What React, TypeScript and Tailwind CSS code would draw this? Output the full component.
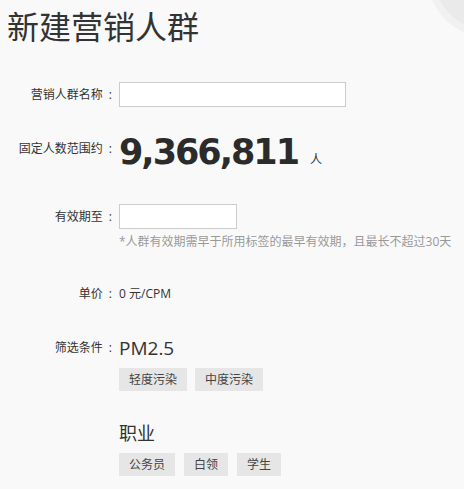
import React from 'react';

const tags1 = ['轻度污染', '中度污染'];
const tags2 = ['公务员', '白领', '学生'];

function Label({ text, className = '' }: { text: string; className?: string }) {
  return (
    <div className={`flex w-[119px] shrink-0 justify-end pr-[7px] text-[12px] leading-[18px] text-[#333] ${className}`}>
      <span>{text}</span>
      <span className="ml-[6px]">:</span>
    </div>
  );
}

function Tag({ text }: { text: string }) {
  return (
    <span className="flex h-[23px] items-center bg-[#e6e6e6] px-[10px] text-[12px] text-[#444]">{text}</span>
  );
}

export default function App() {
  return (
    <div className="relative min-h-screen overflow-hidden bg-[#f9f9f9] font-['Open_Sans','Noto_Sans_CJK_SC',sans-serif] text-[#333]">
      {/* corner decoration */}
      <div className="absolute left-[427px] top-[-88px] flex h-[126px] w-[126px] items-center justify-center rounded-full bg-[#f1f1f1]">
        <div className="h-[112px] w-[112px] rounded-full bg-[#eaeaea]" />
      </div>

      <div className="relative pt-[11px]">
        <h1 className="pl-[7px] text-[32px] font-normal leading-[32px] text-[#333]">新建营销人群</h1>

        {/* name */}
        <div className="mt-[39px] flex items-center">
          <Label text="营销人群名称" />
          <input className="h-[25px] w-[227px] border border-[#ccc] bg-white outline-none" />
        </div>

        {/* count */}
        <div className="mt-[25px] flex items-start">
          <Label text="固定人数范围约" className="mt-[8px]" />
          <div className="flex items-baseline">
            <span className="font-['DejaVu_Sans',sans-serif] text-[35px] font-bold leading-[40px] tracking-[-2px] text-[#2b2b2b]">
              9,366,811
            </span>
            <span className="ml-[12px] text-[12px]">人</span>
          </div>
        </div>

        {/* validity */}
        <div className="mt-[32px] flex items-center">
          <Label text="有效期至" />
          <input className="h-[25px] w-[118px] border border-[#ccc] bg-white outline-none" />
        </div>
        <div className="mt-[4px] flex">
          <div className="w-[119px] shrink-0" />
          <span className="text-[12px] leading-[18px] text-[#999]">*人群有效期需早于所用标签的最早有效期，且最长不超过30天</span>
        </div>

        {/* price */}
        <div className="mt-[34px] flex items-center">
          <Label text="单价" />
          <span className="text-[12px] leading-[18px]">0 元/CPM</span>
        </div>

        {/* filters */}
        <div className="mt-[32px] flex items-center">
          <Label text="筛选条件" />
          <span className="text-[19px] leading-[26px]">PM2.5</span>
        </div>
        <div className="mt-[7px] flex gap-[8px] pl-[119px]">
          {tags1.map((t) => (
            <Tag key={t} text={t} />
          ))}
        </div>

        <div className="mt-[29px] pl-[119px] text-[18px] leading-[26px]">职业</div>
        <div className="mt-[7px] flex gap-[9px] pl-[119px]">
          {tags2.map((t) => (
            <Tag key={t} text={t} />
          ))}
        </div>
      </div>
    </div>
  );
}
